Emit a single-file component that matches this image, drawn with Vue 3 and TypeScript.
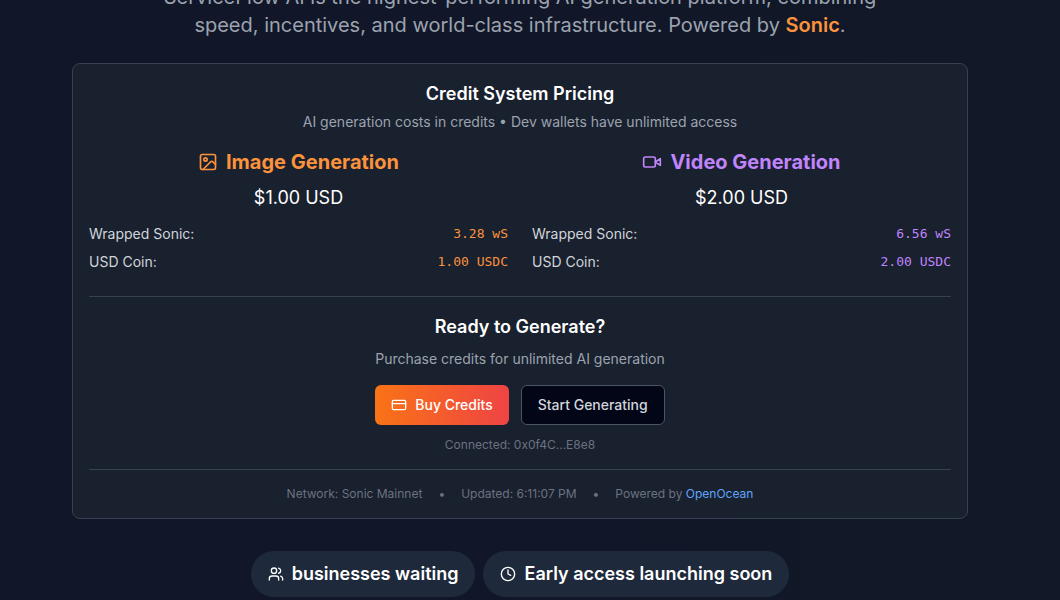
<script setup lang="ts">
interface Price {
  label: string
  value: string
}

interface Plan {
  id: 'image' | 'video'
  title: string
  usd: string
  prices: Price[]
}

const plans: Plan[] = [
  {
    id: 'image',
    title: 'Image Generation',
    usd: '$1.00 USD',
    prices: [
      { label: 'Wrapped Sonic:', value: '3.28 wS' },
      { label: 'USD Coin:', value: '1.00 USDC' },
    ],
  },
  {
    id: 'video',
    title: 'Video Generation',
    usd: '$2.00 USD',
    prices: [
      { label: 'Wrapped Sonic:', value: '6.56 wS' },
      { label: 'USD Coin:', value: '2.00 USDC' },
    ],
  },
]
</script>

<template>
  <main class="page">
    <div class="content">
      <p class="intro">
        ServiceFlow AI is the highest-performing AI generation platform, combining speed,
        incentives, and world-class infrastructure. Powered by <strong>Sonic</strong>.
      </p>

      <section class="card">
        <header class="card-head">
          <h2>Credit System Pricing</h2>
          <p>AI generation costs in credits • Dev wallets have unlimited access</p>
        </header>

        <div class="plans">
          <article v-for="plan in plans" :key="plan.id" class="plan" :class="plan.id">
            <h3>
              <svg v-if="plan.id === 'image'" class="icon" viewBox="0 0 24 24" aria-hidden="true">
                <rect width="18" height="18" x="3" y="3" rx="2" ry="2" />
                <circle cx="9" cy="9" r="2" />
                <path d="m21 15-3.086-3.086a2 2 0 0 0-2.828 0L6 21" />
              </svg>
              <svg v-else class="icon" viewBox="0 0 24 24" aria-hidden="true">
                <path d="m22 8-6 4 6 4V8Z" />
                <rect x="2" y="6" width="14" height="12" rx="2" />
              </svg>
              {{ plan.title }}
            </h3>
            <p class="usd">{{ plan.usd }}</p>
            <dl>
              <div v-for="price in plan.prices" :key="price.label" class="price">
                <dt>{{ price.label }}</dt>
                <dd>{{ price.value }}</dd>
              </div>
            </dl>
          </article>
        </div>

        <section class="cta">
          <h2>Ready to Generate?</h2>
          <p>Purchase credits for unlimited AI generation</p>
          <div class="actions">
            <button type="button" class="buy">
              <svg class="icon small" viewBox="0 0 24 24" aria-hidden="true">
                <rect width="20" height="14" x="2" y="5" rx="2" />
                <line x1="2" x2="22" y1="10" y2="10" />
              </svg>
              Buy Credits
            </button>
            <button type="button" class="start">Start Generating</button>
          </div>
          <p class="wallet">Connected: 0x0f4C...E8e8</p>
        </section>

        <footer class="meta">
          <span>Network: Sonic Mainnet</span>
          <span>•</span>
          <span>Updated: 6:11:07 PM</span>
          <span>•</span>
          <span>Powered by <a href="#">OpenOcean</a></span>
        </footer>
      </section>

      <div class="pills">
        <div class="pill">
          <svg class="icon small" viewBox="0 0 24 24" aria-hidden="true">
            <path d="M16 21v-2a4 4 0 0 0-4-4H6a4 4 0 0 0-4 4v2" />
            <circle cx="9" cy="7" r="4" />
            <path d="M22 21v-2a4 4 0 0 0-3-3.87" />
            <path d="M16 3.13a4 4 0 0 1 0 7.75" />
          </svg>
          businesses waiting
        </div>
        <div class="pill">
          <svg class="icon small" viewBox="0 0 24 24" aria-hidden="true">
            <circle cx="12" cy="12" r="10" />
            <polyline points="12 6 12 12 16 14" />
          </svg>
          Early access launching soon
        </div>
      </div>
    </div>
  </main>
</template>

<style>
html,
body {
  height: 100%;
  overflow: hidden;
  background: #111827;
}

#app {
  height: 100%;
}
</style>

<style scoped>
.page {
  box-sizing: border-box;
  height: 100%;
  padding: 0 36px 0 16px;
  background: linear-gradient(to right, #111629, #111827);
  color: #fff;
  font-family: Inter, "Liberation Sans", sans-serif;
  font-size: 14px;
  line-height: 20px;
}

.page h2,
.page h3,
.page p,
.page dl,
.page dd {
  margin: 0;
}

.content {
  display: flex;
  flex-direction: column;
  max-width: 896px;
  margin: 0 auto;
}

.page .intro {
  align-self: center;
  max-width: 768px;
  margin: -17px 0 24px;
  color: #9ca3af;
  font-size: 20px;
  line-height: 28px;
  text-align: center;
}

.intro strong {
  color: #fb923c;
  font-weight: 600;
}

.card {
  padding: 16px;
  border: 1px solid #374151;
  border-radius: 8px;
  background: #19202e;
}

.card-head,
.cta {
  text-align: center;
}

h2 {
  font-size: 18px;
  font-weight: 600;
  line-height: 28px;
}

.card-head p,
.cta p {
  color: #9ca3af;
}

.page .card-head p {
  margin: 4px 0 16px;
}

.plans {
  display: grid;
  grid-template-columns: 1fr 1fr;
  gap: 24px;
}

.icon {
  flex: none;
  width: 20px;
  height: 20px;
  fill: none;
  stroke: currentColor;
  stroke-width: 2;
  stroke-linecap: round;
  stroke-linejoin: round;
}

.icon.small {
  width: 16px;
  height: 16px;
}

.plan h3 {
  display: flex;
  align-items: center;
  justify-content: center;
  gap: 8px;
  font-size: 20px;
  font-weight: 700;
  line-height: 28px;
}

.image h3,
.image dd {
  color: #fb923c;
}

.video h3,
.video dd {
  color: #c084fc;
}

.page .usd {
  margin: 8px 0 12px;
  font-size: 18px;
  line-height: 28px;
  text-align: center;
}

.plan dl {
  display: grid;
  gap: 8px;
}

.price {
  display: flex;
  justify-content: space-between;
}

.price dt {
  color: #d1d5db;
}

.price dd {
  font-family: "DejaVu Sans Mono", "Liberation Mono", monospace;
  font-size: 13px;
}

.cta {
  margin-top: 24px;
  padding-top: 16px;
  border-top: 1px solid #374151;
}

.page .cta p {
  margin-top: 8px;
}

.actions {
  display: flex;
  justify-content: center;
  gap: 12px;
  margin: 16px 0 12px;
}

.actions button {
  display: flex;
  align-items: center;
  gap: 8px;
  height: 40px;
  padding: 0 16px;
  border: 0;
  border-radius: 6px;
  font: inherit;
  font-weight: 500;
  cursor: pointer;
}

.buy {
  background: linear-gradient(to right, #f97316, #ef4444);
  color: #fff;
}

.actions .start {
  border: 1px solid #4b5563;
  background: #020617;
  color: #d1d5db;
}

.page .cta .wallet {
  margin: 0 0 16px;
  color: #6b7280;
  font-size: 12px;
  line-height: 16px;
}

.meta {
  display: flex;
  justify-content: center;
  gap: 16px;
  padding-top: 16px;
  border-top: 1px solid #374151;
  color: #6b7280;
  font-size: 12px;
  line-height: 16px;
}

.meta a {
  color: #60a5fa;
  text-decoration: none;
}

.pills {
  display: flex;
  justify-content: center;
  gap: 8px;
  margin-top: 32px;
}

.pill {
  display: flex;
  align-items: center;
  gap: 8px;
  padding: 8px 16px;
  border: 1px solid transparent;
  border-radius: 999px;
  background: #1e293b;
  font-size: 18px;
  font-weight: 600;
  line-height: 28px;
}
</style>
